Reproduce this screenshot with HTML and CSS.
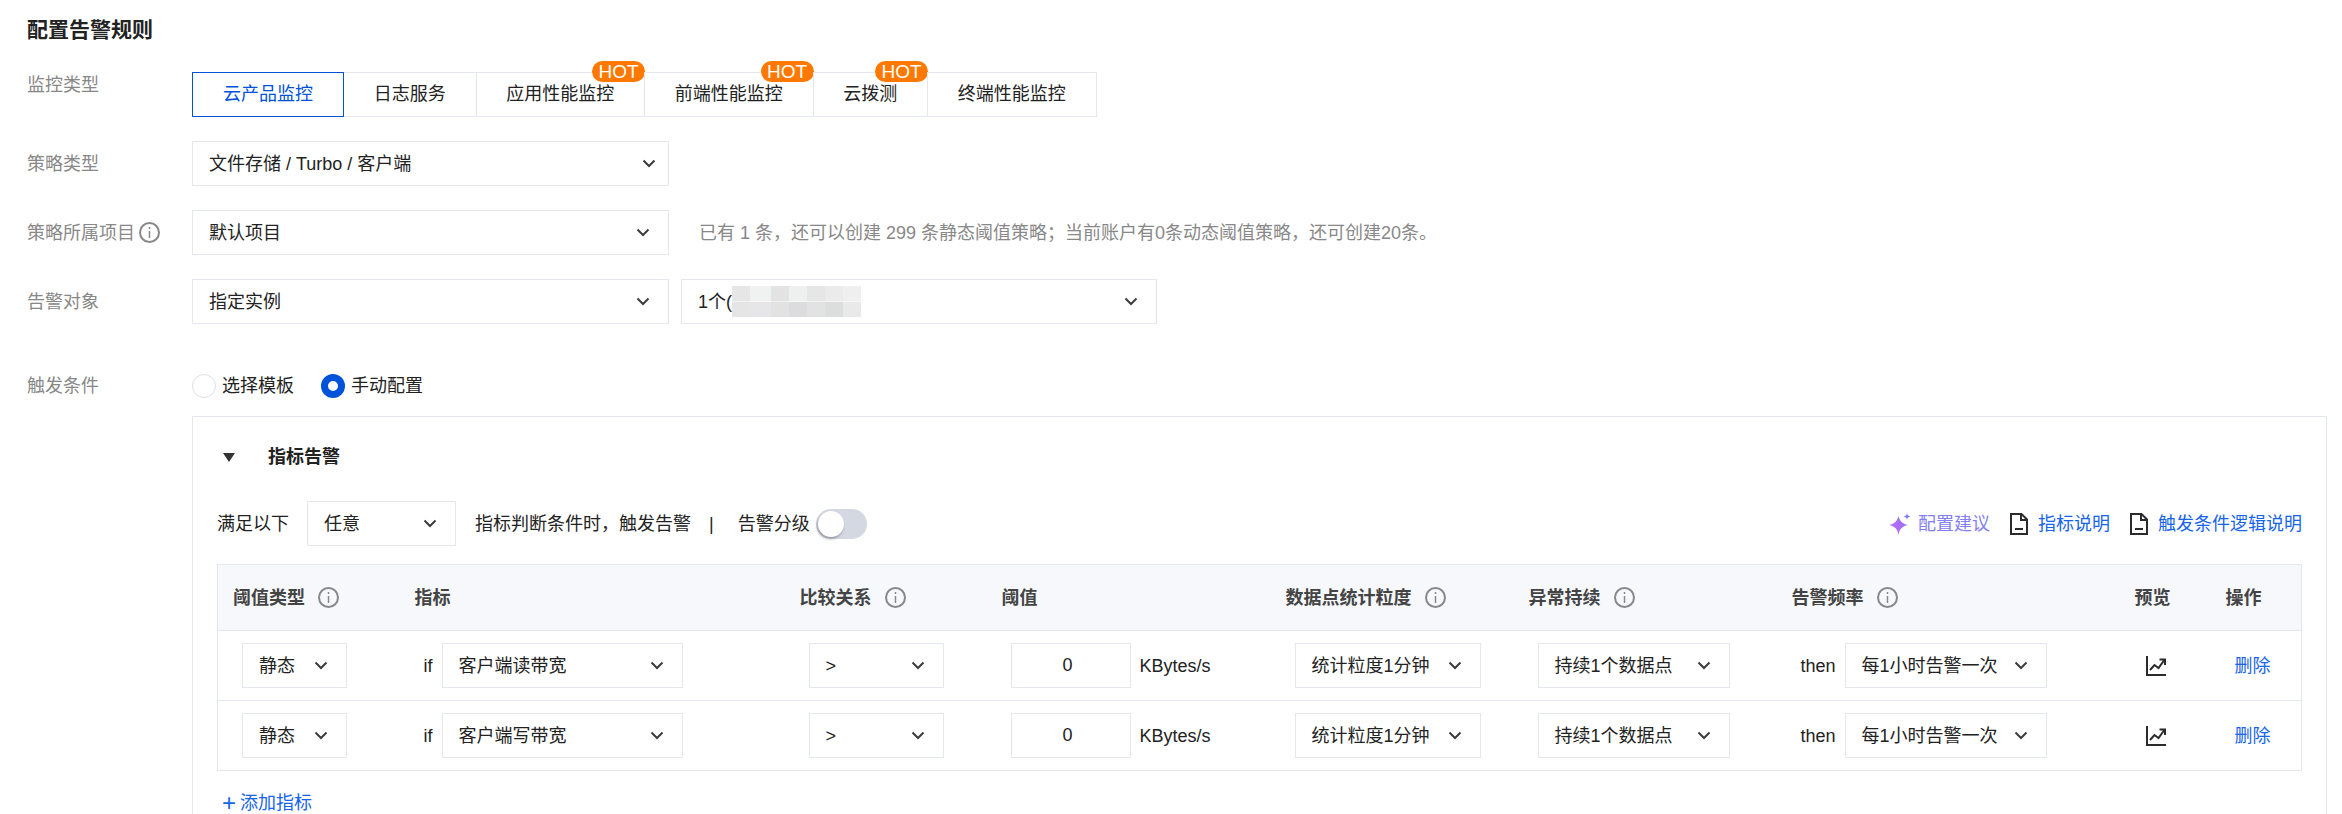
FILE: index.html
```html
<!DOCTYPE html>
<html lang="zh-CN">
<head>
<meta charset="UTF-8" />
<title>配置告警规则</title>
<link rel="stylesheet" href="styles.css">
</head>
<body>
  <svg class="defs" width="0" height="0">
    <symbol id="i-info" viewBox="0 0 21 21">
      <circle cx="10.5" cy="10.5" r="9.5" fill="none" stroke="#888" stroke-width="2" />
      <path d="M10.5 5v2M10.5 9v7" fill="none" stroke="#888" stroke-width="1.5" />
    </symbol>
    <symbol id="i-down" viewBox="0 0 14 9">
      <path d="M1.5 1.5L7 7l5.5-5.5" fill="none" stroke="#3c3c3c" stroke-width="2" />
    </symbol>
    <symbol id="i-doc" viewBox="0 0 18 22">
      <path d="M1 1h10.5L17 6.5V21H1z" fill="none" stroke="#2b2b2b" stroke-width="2" />
      <path d="M11 1v6h6M5 16h8" fill="none" stroke="#2b2b2b" stroke-width="2" />
    </symbol>
    <symbol id="i-chart" viewBox="0 0 20 20">
      <path d="M1 0v19h19" fill="none" stroke="#2b2b2b" stroke-width="2" />
      <path d="M4 14l4.5-5 4 3 5.5-7.5M13.500 3.500H19V9" fill="none" stroke="#2b2b2b" stroke-width="2" />
    </symbol>
  </svg>

  <h1 class="page-title">配置告警规则</h1>

  <div class="form-row">
    <div class="form-label form-label-top">监控类型</div>
    <div class="tabs">
      <div class="tab active">云产品监控</div>
      <div class="tab">日志服务</div>
      <div class="tab">应用性能监控<span class="hot">HOT</span></div>
      <div class="tab">前端性能监控<span class="hot">HOT</span></div>
      <div class="tab">云拨测<span class="hot">HOT</span></div>
      <div class="tab">终端性能监控</div>
    </div>
  </div>

  <div class="form-row">
    <div class="form-label">策略类型</div>
    <div class="select select-wide select-near"><span>文件存储 / Turbo / 客户端</span><svg class="chevron"><use href="#i-down" /></svg></div>
  </div>

  <div class="form-row">
    <div class="form-label">策略所属项目<svg class="info info-label"><use href="#i-info" /></svg></div>
    <div class="select select-wide"><span>默认项目</span><svg class="chevron"><use href="#i-down" /></svg></div>
    <div class="hint">已有 1 条，还可以创建 299 条静态阈值策略；当前账户有0条动态阈值策略，还可创建20条。</div>
  </div>

  <div class="form-row form-row-last">
    <div class="form-label">告警对象</div>
    <div class="select select-wide"><span>指定实例</span><svg class="chevron"><use href="#i-down" /></svg></div>
    <div class="select select-target"><span class="target-text">1个(<i class="mosaic"></i></span><svg class="chevron"><use href="#i-down" /></svg></div>
  </div>

  <div class="form-row radio-row">
    <div class="form-label">触发条件</div>
    <label class="radio"><span class="radio-dot"></span>选择模板</label>
    <label class="radio"><span class="radio-dot checked"></span>手动配置</label>
  </div>

  <div class="panel">
    <div class="panel-title"><span class="triangle"></span>指标告警</div>

    <div class="cond-row">
      <span>满足以下</span>
      <div class="select select-any"><span>任意</span><svg class="chevron"><use href="#i-down" /></svg></div>
      <span>指标判断条件时，触发告警</span>
      <span class="sep">|</span>
      <span>告警分级</span>
      <span class="switch"><span class="knob"></span></span>
      <div class="links">
        <a class="link link-ai">
          <svg class="spark" viewBox="0 0 22 22">
            <defs>
              <linearGradient id="spark-fill" x1="0" y1="1" x2="1" y2="0">
                <stop offset="0" stop-color="#c86bf5" />
                <stop offset="1" stop-color="#8a74f7" />
              </linearGradient>
            </defs>
            <path d="M9.500 2.500C10.500 8 13 10.500 19 12 13 13.500 10.500 16 9.500 22 8.500 16 6 13.500 0 12 6 10.500 8.500 8 9.500 2.500z" fill="url(#spark-fill)" />
            <path d="M18 0c.4 2.300 1 3 3.500 3.500-2.500.5-3.100 1.200-3.500 3.500-.4-2.300-1-3-3.500-3.500C17 3 17.600 2.300 18 0z" fill="#7a78f7" />
          </svg>配置建议</a>
        <a class="link"><svg class="doc"><use href="#i-doc" /></svg>指标说明</a>
        <a class="link"><svg class="doc"><use href="#i-doc" /></svg>触发条件逻辑说明</a>
      </div>
    </div>

    <table class="rules">
      <colgroup>
        <col class="c1"><col class="c2"><col class="c3"><col class="c4"><col class="c5"><col class="c6"><col class="c7"><col class="c8"><col class="c9">
      </colgroup>
      <thead>
        <tr>
          <th>阈值类型<svg class="info"><use href="#i-info" /></svg></th>
          <th>指标</th>
          <th>比较关系<svg class="info"><use href="#i-info" /></svg></th>
          <th>阈值</th>
          <th>数据点统计粒度<svg class="info"><use href="#i-info" /></svg></th>
          <th>异常持续<svg class="info"><use href="#i-info" /></svg></th>
          <th>告警频率<svg class="info"><use href="#i-info" /></svg></th>
          <th>预览</th>
          <th>操作</th>
        </tr>
      </thead>
      <tbody>
        <tr>
          <td><div class="select w-type"><span>静态</span><svg class="chevron"><use href="#i-down" /></svg></div></td>
          <td><div class="cell"><span>if</span><div class="select w-metric"><span>客户端读带宽</span><svg class="chevron"><use href="#i-down" /></svg></div></div></td>
          <td><div class="select w-op"><span>&gt;</span><svg class="chevron"><use href="#i-down" /></svg></div></td>
          <td><div class="cell"><div class="num-input">0</div><span>KBytes/s</span></div></td>
          <td><div class="select w-period"><span>统计粒度1分钟</span><svg class="chevron"><use href="#i-down" /></svg></div></td>
          <td><div class="select w-dur"><span>持续1个数据点</span><svg class="chevron"><use href="#i-down" /></svg></div></td>
          <td><div class="cell"><span>then</span><div class="select w-freq"><span>每1小时告警一次</span><svg class="chevron"><use href="#i-down" /></svg></div></div></td>
          <td><svg class="chart"><use href="#i-chart" /></svg></td>
          <td><a class="link-del">删除</a></td>
        </tr>
        <tr>
          <td><div class="select w-type"><span>静态</span><svg class="chevron"><use href="#i-down" /></svg></div></td>
          <td><div class="cell"><span>if</span><div class="select w-metric"><span>客户端写带宽</span><svg class="chevron"><use href="#i-down" /></svg></div></div></td>
          <td><div class="select w-op"><span>&gt;</span><svg class="chevron"><use href="#i-down" /></svg></div></td>
          <td><div class="cell"><div class="num-input">0</div><span>KBytes/s</span></div></td>
          <td><div class="select w-period"><span>统计粒度1分钟</span><svg class="chevron"><use href="#i-down" /></svg></div></td>
          <td><div class="select w-dur"><span>持续1个数据点</span><svg class="chevron"><use href="#i-down" /></svg></div></td>
          <td><div class="cell"><span>then</span><div class="select w-freq"><span>每1小时告警一次</span><svg class="chevron"><use href="#i-down" /></svg></div></div></td>
          <td><svg class="chart"><use href="#i-chart" /></svg></td>
          <td><a class="link-del">删除</a></td>
        </tr>
      </tbody>
    </table>

    <a class="add-metric"><span class="plus">+</span>添加指标</a>
  </div>
</body>
</html>
```

FILE: styles.css
```css
html, body {
  height: 814px;
  overflow: hidden;
}
body {
  margin: 0;
  padding: 0 15px 0 27px;
  background: #fff;
  color: #222;
  font-family: "Liberation Sans", "Noto Sans CJK SC", sans-serif;
  font-size: 18px;
  line-height: 24px;
}
.defs {
  position: absolute;
}

.page-title {
  margin: 0 0 30px;
  padding-top: 18px;
  font-size: 21px;
  line-height: 24px;
  font-weight: 700;
}

/* Form rows */
.form-row {
  display: flex;
  align-items: center;
  margin-bottom: 24px;
}
.form-row-last {
  margin-bottom: 50px;
}
.form-label {
  display: flex;
  align-items: center;
  width: 165px;
  flex: none;
  color: #888;
}
.form-label-top {
  align-self: flex-start;
  margin-top: 1px;
}
.hint {
  margin-left: 30px;
  color: #888;
}

/* Tabs */
.tabs {
  display: flex;
}
.tab {
  position: relative;
  padding: 0 29.75px;
  height: 45px;
  line-height: 43px;
  border: 1px solid #e4e7ed;
  box-sizing: border-box;
  margin-left: -1px;
}
.tab:first-child {
  margin-left: 0;
  padding: 0 30px;
}
.tab.active {
  z-index: 1;
  color: #0052d9;
  border-color: #0052d9;
}
.hot {
  position: absolute;
  top: -12px;
  right: -1px;
  width: 53px;
  height: 21px;
  line-height: 21px;
  border-radius: 11px;
  background: #ff7800;
  color: #fff;
  font-size: 19px;
  text-align: center;
}

/* Select */
.select {
  display: flex;
  align-items: center;
  justify-content: space-between;
  flex: none;
  height: 45px;
  padding: 0 18px 0 16px;
  border: 1px solid #e4e7ed;
  box-sizing: border-box;
  white-space: nowrap;
}
.chevron {
  width: 14px;
  height: 9px;
  flex: none;
}
.select-wide { width: 477px; }
.select-near { padding-right: 12px; }
.select-target {
  width: 476px;
  margin-left: 12px;
}
.select-any { width: 149px; }
.target-text {
  display: flex;
  align-items: center;
}
.mosaic {
  width: 129px;
  height: 31px;
  background:
    linear-gradient(90deg, #e6e6e6 0 18px, #f0f1f1 18px 39px, #e3e3e3 39px 57px, #eeefef 57px 75px, #e6e6e6 75px 93px, #ebebeb 93px 111px, #efefef 111px) top / 100% 50% no-repeat,
    linear-gradient(90deg, #e5e5e5 0 18px, #e6e6e8 18px 39px, #e3e2e2 39px 57px, #dcdcdf 57px 75px, #e2e2e2 75px 93px, #dcdddd 93px 111px, #e9e9e9 111px) bottom / 100% 50% no-repeat;
}

/* Radio */
.radio-row {
  margin-bottom: 18px;
}
.radio {
  display: flex;
  align-items: center;
  gap: 6px;
  margin-right: 27px;
}
.radio-dot {
  width: 24px;
  height: 24px;
  border: 1px solid #dcdfe8;
  border-radius: 50%;
  box-sizing: border-box;
}
.radio-dot.checked {
  border: 7px solid #0052d9;
}

/* Panel */
.panel {
  margin-left: 165px;
  height: 500px;
  padding: 28px 24px 0;
  border: 1px solid #e4e7ed;
}
.panel-title {
  display: flex;
  align-items: center;
  font-weight: 700;
  margin-bottom: 32px;
}
.triangle {
  width: 0;
  height: 0;
  margin: 0 33px 0 6px;
  border-left: 6px solid transparent;
  border-right: 6px solid transparent;
  border-top: 9px solid #333;
}
.cond-row {
  display: flex;
  align-items: center;
  margin-bottom: 18px;
  white-space: nowrap;
}
.cond-row .select {
  margin: 0 19px 0 18px;
}
.sep {
  margin: 0 24px 0 18px;
}
.switch {
  width: 51px;
  height: 30px;
  margin-left: 6px;
  padding: 2px;
  border-radius: 15px;
  background: #d3d8e2;
  box-sizing: border-box;
}
.knob {
  display: block;
  width: 26px;
  height: 26px;
  border-radius: 50%;
  background: #fff;
  box-shadow: -1px 2px 3px rgba(0, 0, 0, 0.3);
}
.links {
  display: flex;
  align-items: center;
  gap: 20px;
  margin-left: auto;
}
.link {
  display: flex;
  align-items: center;
  gap: 10px;
  color: #1664e8;
}
.link-ai {
  gap: 7px;
  color: #8480f2;
}
.spark {
  width: 22px;
  height: 22px;
}
.doc {
  width: 18px;
  height: 22px;
}

/* Rules table */
.rules {
  width: 100%;
  table-layout: fixed;
  border-collapse: collapse;
}
.c1 { width: 182px; }
.c2 { width: 385px; }
.c3 { width: 202px; }
.c4 { width: 284px; }
.c5 { width: 243px; }
.c6 { width: 263px; }
.c7 { width: 343px; }
.c8 { width: 91px; }
.c9 { width: 91px; }
.rules th {
  height: 65px;
  padding: 0 0 0 15px;
  background: #f6f8fc;
  border: 1px solid #e4e7ed;
  border-left: 0;
  border-right: 0;
  color: #444;
  font-weight: 700;
  text-align: left;
  white-space: nowrap;
}
.rules td {
  padding: 12px 0 12px 24px;
  border-bottom: 1px solid #e4e7ed;
  white-space: nowrap;
}
.rules th:first-child, .rules td:first-child {
  border-left: 1px solid #e4e7ed;
}
.rules th:last-child, .rules td:last-child {
  border-right: 1px solid #e4e7ed;
}
.info {
  width: 21px;
  height: 21px;
  margin-left: 13px;
  vertical-align: -4px;
}
.info-label {
  margin-left: 4px;
}
.cell {
  display: flex;
  align-items: center;
  gap: 9px;
}
.w-type { width: 105px; }
.w-metric { width: 241px; }
.w-op { width: 135px; }
.w-period { width: 186px; }
.w-dur { width: 192px; }
.w-freq { width: 202px; }
.num-input {
  width: 120px;
  height: 45px;
  padding-right: 6px;
  line-height: 43px;
  border: 1px solid #e4e7ed;
  box-sizing: border-box;
  text-align: center;
}
.chart {
  display: block;
  width: 20px;
  height: 20px;
  margin-left: 2px;
}
.link-del {
  color: #1664e8;
}
.add-metric {
  display: flex;
  align-items: center;
  margin-top: 20px;
  color: #1664e8;
}
.plus {
  width: 18px;
  margin-left: 5px;
  font-size: 24px;
}
```
